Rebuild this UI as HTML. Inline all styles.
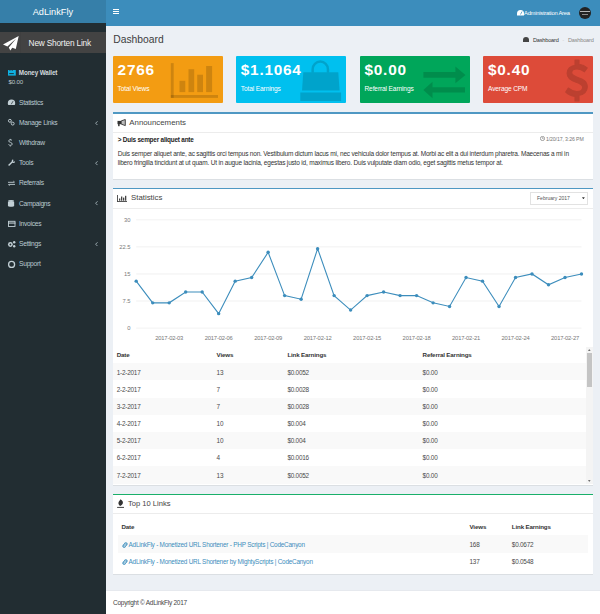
<!DOCTYPE html>
<html><head><meta charset="utf-8">
<style>
*{box-sizing:border-box;margin:0;padding:0}
html,body{width:600px;height:614px;overflow:hidden}
body{position:relative;background:#ecf0f5;font-family:"Liberation Sans",sans-serif;color:#333}
.a{position:absolute;white-space:nowrap}
.logo{left:0;top:0;width:105.7px;height:23px;background:#367fa9;color:#fff;font-size:9.2px;line-height:25.1px;text-align:center}
.nav{left:105.7px;top:0;width:494.3px;height:25.7px;background:#3c8dbc}
.side{left:0;top:23px;width:105.7px;height:591px;background:#222d32}
.btn{left:0;top:32px;width:105.7px;height:21px;background:#434343}
.menu{color:#bccad1;font-size:6.7px;line-height:8px;left:19px;letter-spacing:-0.27px}
.ico{position:absolute}
.content-title{left:113.3px;top:33.6px;font-size:10.3px;line-height:12px;color:#3d3d3d}
.ibox{top:56.2px;height:46.6px;border-radius:1px;color:#fff}
.ibox .num{position:absolute;left:4.6px;top:5.25px;font-weight:bold;font-size:15.4px;line-height:18px;letter-spacing:0.75px}
.ibox .lbl{position:absolute;left:4.6px;top:29.2px;font-size:6.6px;line-height:8px;letter-spacing:-0.13px}
.box{left:112.8px;width:480.2px;background:#fff;box-shadow:0 0.6px 0.4px rgba(0,0,0,0.07)}
.bt{position:absolute;left:0;top:0;width:100%;height:1.5px;opacity:0.9}
.hdr{position:absolute;left:0;width:100%;height:0.6px;background:#ececec}
.txt{font-size:6.5px;line-height:9px;color:#333;letter-spacing:-0.19px}
.th{font-weight:bold;font-size:6.2px;line-height:8px;color:#333;letter-spacing:-0.15px}
.td{font-size:6.4px;line-height:8px;color:#4a4a4a;letter-spacing:-0.22px}
.stripe{position:absolute;background:#f9f9f9}
</style></head>
<body>
<!-- header -->
<div class="a logo">AdLinkFly</div>
<div class="a nav"></div>
<div class="a" style="left:112.9px;top:9px;width:5.9px;height:1px;background:#fff"></div>
<div class="a" style="left:112.9px;top:11px;width:5.9px;height:1px;background:#fff"></div>
<div class="a" style="left:112.9px;top:13px;width:5.9px;height:1px;background:#fff"></div>
<svg class="a" style="left:517px;top:10px" width="7" height="6" viewBox="0 0 14 12"><path d="M7 0A7 7 0 0 0 0 7v4h14V7A7 7 0 0 0 7 0z" fill="#fff"/><path d="M7 9L10 3" stroke="#3c8dbc" stroke-width="1.5"/></svg>
<div class="a" style="left:524px;top:9px;font-size:5.8px;line-height:8px;color:#fff;letter-spacing:-0.24px">Administration Area</div>
<div class="a" style="left:579px;top:7px;width:12px;height:12px;border-radius:50%;background:#222"></div>
<div class="a" style="left:579.8px;top:10.9px;width:10.4px;height:1.5px;background:#b5b5b5"></div>
<div class="a" style="left:582.3px;top:14.4px;width:5.4px;height:1.1px;background:#8a8a8a"></div>

<!-- sidebar -->
<div class="a side"></div>
<div class="a btn"></div>
<div class="a" style="left:20.3px;top:32px;width:0.6px;height:21px;background:#404040"></div>
<svg class="a" style="left:2.8px;top:35.5px" width="16" height="15" viewBox="0 0 16 15"><path d="M15.7 0L0 8.6l4.4 1.9L13.2 2.6 5.8 11.4 7.3 14.5 9.3 11.7 12.8 13.1z" fill="#fff"/></svg>
<div class="a" style="left:28.6px;top:37.6px;font-size:8.3px;line-height:10px;color:#f2f2f2;letter-spacing:-0.2px">New Shorten Link</div>

<svg class="a" style="left:8px;top:70px" width="8" height="6" viewBox="0 0 8 6"><rect x="0" y="0" width="7.8" height="5.6" fill="#0eb1e2"/><rect x="1.2" y="3.2" width="4.6" height="0.9" fill="#1d2a30"/><rect x="1.2" y="0" width="1.4" height="0.8" fill="#27546a"/><rect x="3.6" y="0" width="1.4" height="0.8" fill="#27546a"/></svg>
<div class="a" style="left:18.8px;top:69.4px;font-weight:bold;font-size:6.3px;line-height:8px;color:#d3dade;letter-spacing:-0.13px">Money Wallet</div>
<div class="a" style="left:8.4px;top:78.3px;font-size:6.1px;line-height:8px;color:#bcc6cb;letter-spacing:-0.1px">$0.00</div>

<div class="a menu" style="top:98.6px">Statistics</div>
<div class="a menu" style="top:118.7px">Manage Links</div>
<div class="a menu" style="top:138.8px">Withdraw</div>
<div class="a menu" style="top:159px">Tools</div>
<div class="a menu" style="top:179.1px">Referrals</div>
<div class="a menu" style="top:199.5px">Campaigns</div>
<div class="a menu" style="top:220.1px">Invoices</div>
<div class="a menu" style="top:240.2px">Settings</div>
<div class="a menu" style="top:260px">Support</div>
<svg class="a" style="left:95.3px;top:120.9px" width="3" height="4.4" viewBox="0 0 3 4.4"><path d="M2.5 0.3L0.6 2.2 2.5 4.1" stroke="#b8c7ce" stroke-width="0.8" fill="none"/></svg>
<svg class="a" style="left:95.3px;top:161.2px" width="3" height="4.4" viewBox="0 0 3 4.4"><path d="M2.5 0.3L0.6 2.2 2.5 4.1" stroke="#b8c7ce" stroke-width="0.8" fill="none"/></svg>
<svg class="a" style="left:95.3px;top:201.4px" width="3" height="4.4" viewBox="0 0 3 4.4"><path d="M2.5 0.3L0.6 2.2 2.5 4.1" stroke="#b8c7ce" stroke-width="0.8" fill="none"/></svg>
<svg class="a" style="left:95.3px;top:241.6px" width="3" height="4.4" viewBox="0 0 3 4.4"><path d="M2.5 0.3L0.6 2.2 2.5 4.1" stroke="#b8c7ce" stroke-width="0.8" fill="none"/></svg>
<!-- sidebar icons -->
<svg class="a" style="left:0;top:0;overflow:visible" width="105" height="300">
 <g fill="#c2cfd5" stroke="none">
  <!-- dashboard gauge -->
  <path d="M11.5 99.6a3.7 3.7 0 0 0-3.7 3.7c0 .7.2 1.3.5 1.8h6.4c.3-.5.5-1.1.5-1.8a3.7 3.7 0 0 0-3.7-3.7zM11.5 104.2l1.6-3" fill-rule="evenodd"/>
  <path d="M11.2 104.3l1.9-3.2" stroke="#222d32" stroke-width="0.7"/>
 </g>
 <g fill="none" stroke="#c2cfd5" stroke-width="1">
  <!-- links -->
  <circle cx="9.9" cy="120.8" r="1.45" stroke-width="0.95"/><circle cx="12.7" cy="123.6" r="1.45" stroke-width="0.95"/>
  <!-- dollar -->
  <path d="M12 140.4c-.4-.4-1-.6-1.7-.6-1 0-1.6.5-1.6 1.2 0 1.7 3.5 1 3.5 3 0 .8-.7 1.3-1.8 1.3-.7 0-1.4-.3-1.9-.8M10.3 138.9v1M10.3 145.5v1" stroke-width="0.9"/>
  <!-- wrench -->
  <path d="M8.6 165.6l3.8-3.8" stroke-width="1.4"/>
  <path d="M12.6 162.1a1.7 1.7 0 0 1 .6-2.3M12.4 162a1.7 1.7 0 0 0 2.3-.4" stroke-width="1.2"/>
  <!-- exchange -->
  <path d="M8 182.3h6M14.8 182.3l-1.4-1.1M15 184.4h-6M8.2 184.4l1.4 1.1" stroke-width="0.9"/>
  <!-- invoices -->
  <rect x="8.5" y="221.3" width="6.5" height="5.2" stroke-width="0.9"/>
  <!-- support -->
  <circle cx="11.6" cy="264.4" r="3" stroke-width="1.3"/>
 </g>
 <g fill="#c2cfd5">
  <!-- campaigns -->
  <ellipse cx="11.05" cy="201" rx="3.1" ry="0.9"/>
  <path d="M7.95 201.8h6.2v4.2c0 .5-1.4.8-3.1.8s-3.1-.3-3.1-.8z"/>
  <rect x="8" y="222.5" width="7.5" height="1.1"/>
  <!-- settings -->
  <circle cx="10.4" cy="244.5" r="2.4"/><circle cx="14.2" cy="242.3" r="1.2"/><circle cx="14.2" cy="246.2" r="1.2"/>
  <circle cx="10.4" cy="244.5" r="0.9" fill="#222d32"/>
 </g>
</svg>

<!-- content header -->
<div class="a content-title">Dashboard</div>
<svg class="a" style="left:523px;top:37px" width="6" height="5" viewBox="0 0 12 10"><path d="M6 0A6 6 0 0 0 0 6v4h12V6A6 6 0 0 0 6 0z" fill="#444"/></svg>
<div class="a" style="left:533px;top:36px;font-size:5.6px;line-height:8px;color:#333;letter-spacing:-0.2px">Dashboard</div>
<div class="a" style="left:562.5px;top:36px;font-size:5.1px;line-height:8px;color:#ccc">-</div>
<div class="a" style="left:568px;top:36px;font-size:5.6px;line-height:8px;color:#888;letter-spacing:-0.2px">Dashboard</div>

<!-- info boxes -->
<div class="a ibox" style="left:113px;width:109.5px;background:#f39c12">
 <div class="num">2766</div><div class="lbl">Total Views</div>
 <svg style="position:absolute;left:0;top:0" width="110" height="47"><g fill="rgba(0,0,0,0.15)">
  <rect x="57.8" y="7.1" width="2.9" height="34.8"/><rect x="57.8" y="39" width="47.2" height="2.9"/>
  <rect x="66.5" y="24.8" width="5.8" height="11.3"/><rect x="75.5" y="13.2" width="5.7" height="22.9"/>
  <rect x="84.2" y="18.7" width="5.8" height="17.4"/><rect x="93.1" y="10" width="6" height="26.1"/>
 </g></svg>
</div>
<div class="a ibox" style="left:236.2px;width:109.8px;background:#00c0ef">
 <div class="num">$1.1064</div><div class="lbl">Total Earnings</div>
 <svg style="position:absolute;left:0;top:0" width="110" height="47"><g fill="rgba(0,0,0,0.15)">
  <path d="M75.4 16.2V13.2a8.9 8.9 0 0 1 17.8 0v3h-2.5v-3a6.4 6.4 0 0 0-12.8 0v3z"/>
  <path d="M67.3 16.2h35l1.3 18.2H66z"/><path d="M64.3 36.6h40.8v8.5H64.3z"/>
 </g></svg>
</div>
<div class="a ibox" style="left:359.9px;width:109.8px;background:#00a65a">
 <div class="num">$0.00</div><div class="lbl">Referral Earnings</div>
 <svg style="position:absolute;left:0;top:0" width="110" height="47"><g fill="rgba(0,0,0,0.15)">
  <path d="M63.4 16.1h32v-5.5l10.1 8.3-10.1 8.3v-5.5h-32z"/>
  <path d="M105 31.2h-32.5v-5.5l-9.2 8.2 9.2 8.3v-5.6H105z"/>
 </g></svg>
</div>
<div class="a ibox" style="left:483.4px;width:109.6px;background:#dd4b39">
 <div class="num">$0.40</div><div class="lbl">Average CPM</div>
 <svg style="position:absolute;left:0;top:0" width="110" height="47"><g fill="#bc4030" stroke="#bc4030" stroke-width="1.1" stroke-linejoin="round">
  <path d="M92 4h4v4.2c3.4.5 6.3 2 8.2 3.8l-2.7 3.8c-2-1.6-4.7-2.8-7.5-2.8-3.2 0-5.3 1.5-5.3 3.8 0 2.4 2.3 3.3 6.1 4.6 5.1 1.7 9.5 3.7 9.5 9.4 0 4.5-3.4 7.9-8.3 8.5V45h-4v-4.6c-3.6-.5-7-2.2-9.3-4.4l2.6-4c2.4 2 5.4 3.6 8.5 3.6 3.5 0 5.8-1.8 5.8-4.4 0-2.7-2.5-3.6-6.5-5-4.8-1.6-9-3.6-9-9 0-4.1 3.2-7.3 7.9-8z"/>
 </g></svg>
</div>

<!-- Announcements -->
<div class="a box" style="top:112px;height:66.8px">
 <div class="bt" style="background:#3c8dbc"></div>
 <div class="hdr" style="top:20px"></div>
</div>
<svg class="a" style="left:117px;top:118.5px" width="10" height="8" viewBox="0 0 10 8"><rect x="0.5" y="1.9" width="3.6" height="3.3" fill="#333"/><rect x="1.1" y="4.6" width="1.5" height="2.6" fill="#333"/><path d="M4.2 1.9L8.3 0.5V6.6L4.2 5.1z" stroke="#333" stroke-width="0.9" fill="#bbb" stroke-linejoin="round"/></svg>
<div class="a" style="left:129.3px;top:117.5px;font-size:7.85px;line-height:10px;color:#444">Announcements</div>
<div class="a" style="left:117.7px;top:135.9px;font-weight:bold;font-size:6.4px;line-height:8px;color:#222;letter-spacing:-0.2px">&gt; Duis semper aliquet ante</div>
<svg class="a" style="left:540px;top:136.4px" width="5" height="5" viewBox="0 0 10 10"><circle cx="5" cy="5" r="4.2" fill="none" stroke="#777" stroke-width="1.4"/><path d="M5 2.5V5h2" stroke="#777" stroke-width="1.2" fill="none"/></svg>
<div class="a" style="left:546px;top:134.6px;font-size:5.2px;line-height:8px;color:#777;letter-spacing:-0.12px">1/20/17, 3:26 PM</div>
<div class="a txt" style="left:117.7px;top:148.6px">Duis semper aliquet ante, ac sagittis orci tempus non. Vestibulum dictum lacus mi, nec vehicula dolor tempus at. Morbi ac elit a dui interdum pharetra. Maecenas a mi in</div>
<div class="a txt" style="left:117.7px;top:157.5px">libero fringilla tincidunt at ut quam. Ut in augue lacinia, egestas justo id, maximus libero. Duis vulputate diam odio, eget sagittis metus tempor at.</div>

<!-- Statistics -->
<div class="a box" style="top:187.7px;height:297px">
 <div class="bt" style="background:#3c8dbc"></div>
 <div class="hdr" style="top:20.8px"></div>
</div>
<svg class="a" style="left:117px;top:194.5px" width="10" height="7" viewBox="0 0 10 7"><g fill="#444"><rect x="0" y="0" width="0.9" height="7"/><rect x="0" y="6.1" width="10" height="0.9"/><rect x="2" y="3.5" width="1.3" height="2.2"/><rect x="4" y="1.5" width="1.3" height="4.2"/><rect x="6" y="2.6" width="1.3" height="3.1"/><rect x="8" y="0.8" width="1.3" height="4.9"/></g></svg>
<div class="a" style="left:131px;top:192.5px;font-size:7.85px;line-height:10px;color:#444">Statistics</div>
<div class="a" style="left:530.4px;top:192px;width:58px;height:13.3px;border:0.6px solid #e2e2e2;background:#fff"></div>
<div class="a" style="left:537px;top:193.9px;font-size:5.07px;line-height:8px;color:#555">February 2017</div>
<svg class="a" style="left:582.4px;top:196.8px" width="2.8" height="2.5" viewBox="0 0 4 3"><path d="M0 0h4L2 3z" fill="#333"/></svg>

<svg class="a" id="chart" style="left:0;top:0" width="600" height="614">
<line x1="136.2" y1="328.10" x2="581.5" y2="328.10" stroke="#e8e8e8" stroke-width="0.6"/>
<text x="130.5" y="330.00" text-anchor="end" font-size="5.8" fill="#7a7a7a" font-family="Liberation Sans">0</text>
<line x1="136.2" y1="301.03" x2="581.5" y2="301.03" stroke="#e8e8e8" stroke-width="0.6"/>
<text x="130.5" y="302.93" text-anchor="end" font-size="5.8" fill="#7a7a7a" font-family="Liberation Sans">7.5</text>
<line x1="136.2" y1="273.95" x2="581.5" y2="273.95" stroke="#e8e8e8" stroke-width="0.6"/>
<text x="130.5" y="275.85" text-anchor="end" font-size="5.8" fill="#7a7a7a" font-family="Liberation Sans">15</text>
<line x1="136.2" y1="246.88" x2="581.5" y2="246.88" stroke="#e8e8e8" stroke-width="0.6"/>
<text x="130.5" y="248.78" text-anchor="end" font-size="5.8" fill="#7a7a7a" font-family="Liberation Sans">22.5</text>
<line x1="136.2" y1="219.80" x2="581.5" y2="219.80" stroke="#e8e8e8" stroke-width="0.6"/>
<text x="130.5" y="221.70" text-anchor="end" font-size="5.8" fill="#7a7a7a" font-family="Liberation Sans">30</text>
<text x="169.19" y="339.90" text-anchor="middle" font-size="5.8" letter-spacing="-0.17" fill="#777" font-family="Liberation Sans">2017-02-03</text>
<text x="218.66" y="339.90" text-anchor="middle" font-size="5.8" letter-spacing="-0.17" fill="#777" font-family="Liberation Sans">2017-02-06</text>
<text x="268.14" y="339.90" text-anchor="middle" font-size="5.8" letter-spacing="-0.17" fill="#777" font-family="Liberation Sans">2017-02-09</text>
<text x="317.62" y="339.90" text-anchor="middle" font-size="5.8" letter-spacing="-0.17" fill="#777" font-family="Liberation Sans">2017-02-12</text>
<text x="367.10" y="339.90" text-anchor="middle" font-size="5.8" letter-spacing="-0.17" fill="#777" font-family="Liberation Sans">2017-02-15</text>
<text x="416.57" y="339.90" text-anchor="middle" font-size="5.8" letter-spacing="-0.17" fill="#777" font-family="Liberation Sans">2017-02-18</text>
<text x="466.05" y="339.90" text-anchor="middle" font-size="5.8" letter-spacing="-0.17" fill="#777" font-family="Liberation Sans">2017-02-21</text>
<text x="515.53" y="339.90" text-anchor="middle" font-size="5.8" letter-spacing="-0.17" fill="#777" font-family="Liberation Sans">2017-02-24</text>
<text x="565.01" y="339.90" text-anchor="middle" font-size="5.8" letter-spacing="-0.17" fill="#777" font-family="Liberation Sans">2017-02-27</text>
<path d="M136.20 281.17 L152.69 302.83 L169.19 302.83 L185.68 292.00 L202.17 292.00 L218.66 313.66 L235.16 281.17 L251.65 277.56 L268.14 252.29 L284.63 295.61 L301.13 299.22 L317.62 248.68 L334.11 295.61 L350.60 310.05 L367.10 295.61 L383.59 292.00 L400.08 295.61 L416.57 295.61 L433.07 302.83 L449.56 306.44 L466.05 277.56 L482.54 281.17 L499.04 306.44 L515.53 277.56 L532.02 273.95 L548.51 284.78 L565.01 277.56 L581.50 273.95" fill="none" stroke="#3c8dbc" stroke-width="1.1"/>
<circle cx="136.20" cy="281.17" r="1.7" fill="#3c8dbc"/>
<circle cx="152.69" cy="302.83" r="1.7" fill="#3c8dbc"/>
<circle cx="169.19" cy="302.83" r="1.7" fill="#3c8dbc"/>
<circle cx="185.68" cy="292.00" r="1.7" fill="#3c8dbc"/>
<circle cx="202.17" cy="292.00" r="1.7" fill="#3c8dbc"/>
<circle cx="218.66" cy="313.66" r="1.7" fill="#3c8dbc"/>
<circle cx="235.16" cy="281.17" r="1.7" fill="#3c8dbc"/>
<circle cx="251.65" cy="277.56" r="1.7" fill="#3c8dbc"/>
<circle cx="268.14" cy="252.29" r="1.7" fill="#3c8dbc"/>
<circle cx="284.63" cy="295.61" r="1.7" fill="#3c8dbc"/>
<circle cx="301.13" cy="299.22" r="1.7" fill="#3c8dbc"/>
<circle cx="317.62" cy="248.68" r="1.7" fill="#3c8dbc"/>
<circle cx="334.11" cy="295.61" r="1.7" fill="#3c8dbc"/>
<circle cx="350.60" cy="310.05" r="1.7" fill="#3c8dbc"/>
<circle cx="367.10" cy="295.61" r="1.7" fill="#3c8dbc"/>
<circle cx="383.59" cy="292.00" r="1.7" fill="#3c8dbc"/>
<circle cx="400.08" cy="295.61" r="1.7" fill="#3c8dbc"/>
<circle cx="416.57" cy="295.61" r="1.7" fill="#3c8dbc"/>
<circle cx="433.07" cy="302.83" r="1.7" fill="#3c8dbc"/>
<circle cx="449.56" cy="306.44" r="1.7" fill="#3c8dbc"/>
<circle cx="466.05" cy="277.56" r="1.7" fill="#3c8dbc"/>
<circle cx="482.54" cy="281.17" r="1.7" fill="#3c8dbc"/>
<circle cx="499.04" cy="306.44" r="1.7" fill="#3c8dbc"/>
<circle cx="515.53" cy="277.56" r="1.7" fill="#3c8dbc"/>
<circle cx="532.02" cy="273.95" r="1.7" fill="#3c8dbc"/>
<circle cx="548.51" cy="284.78" r="1.7" fill="#3c8dbc"/>
<circle cx="565.01" cy="277.56" r="1.7" fill="#3c8dbc"/>
<circle cx="581.50" cy="273.95" r="1.7" fill="#3c8dbc"/>
</svg>

<!-- stats table -->
<div class="a" style="left:112.8px;top:346.5px;width:473.5px;height:137.8px;overflow:hidden">
</div>
<div id="rows">
<div class="a th" style="left:116.7px;top:350.60px">Date</div>
<div class="a th" style="left:216.6px;top:350.60px">Views</div>
<div class="a th" style="left:287.4px;top:350.60px">Link Earnings</div>
<div class="a th" style="left:422.6px;top:350.60px">Referral Earnings</div>
<div class="a stripe" style="left:112.8px;top:363.30px;width:473.5px;height:17.17px"></div>
<div class="a td" style="left:116.7px;top:368.50px">1-2-2017</div>
<div class="a td" style="left:216.6px;top:368.50px">13</div>
<div class="a td" style="left:287.4px;top:368.50px">$0.0052</div>
<div class="a td" style="left:422.6px;top:368.50px">$0.00</div>
<div class="a td" style="left:116.7px;top:385.67px">2-2-2017</div>
<div class="a td" style="left:216.6px;top:385.67px">7</div>
<div class="a td" style="left:287.4px;top:385.67px">$0.0028</div>
<div class="a td" style="left:422.6px;top:385.67px">$0.00</div>
<div class="a stripe" style="left:112.8px;top:397.64px;width:473.5px;height:17.17px"></div>
<div class="a td" style="left:116.7px;top:402.84px">3-2-2017</div>
<div class="a td" style="left:216.6px;top:402.84px">7</div>
<div class="a td" style="left:287.4px;top:402.84px">$0.0028</div>
<div class="a td" style="left:422.6px;top:402.84px">$0.00</div>
<div class="a td" style="left:116.7px;top:420.01px">4-2-2017</div>
<div class="a td" style="left:216.6px;top:420.01px">10</div>
<div class="a td" style="left:287.4px;top:420.01px">$0.004</div>
<div class="a td" style="left:422.6px;top:420.01px">$0.00</div>
<div class="a stripe" style="left:112.8px;top:431.98px;width:473.5px;height:17.17px"></div>
<div class="a td" style="left:116.7px;top:437.18px">5-2-2017</div>
<div class="a td" style="left:216.6px;top:437.18px">10</div>
<div class="a td" style="left:287.4px;top:437.18px">$0.004</div>
<div class="a td" style="left:422.6px;top:437.18px">$0.00</div>
<div class="a td" style="left:116.7px;top:454.35px">6-2-2017</div>
<div class="a td" style="left:216.6px;top:454.35px">4</div>
<div class="a td" style="left:287.4px;top:454.35px">$0.0016</div>
<div class="a td" style="left:422.6px;top:454.35px">$0.00</div>
<div class="a stripe" style="left:112.8px;top:466.32px;width:473.5px;height:18.18px"></div>
<div class="a td" style="left:116.7px;top:471.52px">7-2-2017</div>
<div class="a td" style="left:216.6px;top:471.52px">13</div>
<div class="a td" style="left:287.4px;top:471.52px">$0.0052</div>
<div class="a td" style="left:422.6px;top:471.52px">$0.00</div>
</div><!--/rows-->
<div class="a" style="left:586.3px;top:346.5px;width:6.5px;height:137.8px;background:#f4f4f4"></div>
<div class="a" style="left:587.2px;top:353px;width:4.6px;height:34px;background:#c4c4c4"></div>
<svg class="a" style="left:588.2px;top:349.2px" width="2.6" height="2" viewBox="0 0 4 3"><path d="M0 3h4L2 0z" fill="#707070"/></svg>
<svg class="a" style="left:588.2px;top:479.8px" width="2.6" height="2" viewBox="0 0 4 3"><path d="M0 0h4L2 3z" fill="#707070"/></svg>

<!-- Top 10 -->
<div class="a box" style="top:493.5px;height:80.3px">
 <div class="bt" style="background:#00a65a"></div>
 <div class="hdr" style="top:19.5px"></div>
</div>
<svg class="a" style="left:117px;top:499px" width="8" height="9" viewBox="0 0 8 9"><path d="M3.4 0.3C5.6 1.5 6.3 3 5.8 4.5 5.3 5.8 4.2 6.5 3.2 7 1.7 6 1.2 4.8 1.5 3.5 1.9 2.2 3.1 1.6 3.4 0.3z" fill="#333"/><rect x="0.1" y="7.9" width="6.9" height="1" fill="#444"/></svg>
<div class="a" style="left:128px;top:499px;font-size:7.57px;line-height:10px;color:#444">Top 10 Links</div>
<div class="a th" style="left:121.4px;top:523px">Date</div>
<div class="a th" style="left:469.5px;top:523px">Views</div>
<div class="a th" style="left:511.8px;top:523px">Link Earnings</div>
<div class="a stripe" style="left:118px;top:535px;width:470px;height:17.9px"></div>
<svg class="a" style="left:121.5px;top:542px" width="6" height="6" viewBox="0 0 12 12"><path d="M5 7l2-2M4.8 4.2l1.3-1.8a2.3 2.3 0 0 1 3.5 3L8 7.4M7.2 7.8L5.9 9.6a2.3 2.3 0 0 1-3.5-3L4 4.6" stroke="#3c8dbc" stroke-width="2.1" fill="none"/></svg>
<div class="a td" style="left:128.5px;top:541.3px;color:#3c8dbc">AdLinkFly - Monetized URL Shortener - PHP Scripts | CodeCanyon</div>
<div class="a td" style="left:469.5px;top:541.3px">168</div>
<div class="a td" style="left:511.8px;top:541.3px">$0.0672</div>
<svg class="a" style="left:121.5px;top:559px" width="6" height="6" viewBox="0 0 12 12"><path d="M5 7l2-2M4.8 4.2l1.3-1.8a2.3 2.3 0 0 1 3.5 3L8 7.4M7.2 7.8L5.9 9.6a2.3 2.3 0 0 1-3.5-3L4 4.6" stroke="#3c8dbc" stroke-width="2.1" fill="none"/></svg>
<div class="a td" style="left:128.5px;top:558.3px;color:#3c8dbc">AdLinkFly - Monetized URL Shortener by MightyScripts | CodeCanyon</div>
<div class="a td" style="left:469.5px;top:558.3px">137</div>
<div class="a td" style="left:511.8px;top:558.3px">$0.0548</div>

<!-- footer -->
<div class="a" style="left:105.7px;top:590.4px;width:494.3px;height:24px;background:#fff;border-top:0.5px solid #e6e9ee"></div>
<div class="a" style="left:113px;top:598.6px;font-size:6.5px;line-height:8px;color:#444;letter-spacing:-0.26px">Copyright © AdLinkFly 2017</div>
</body></html>
